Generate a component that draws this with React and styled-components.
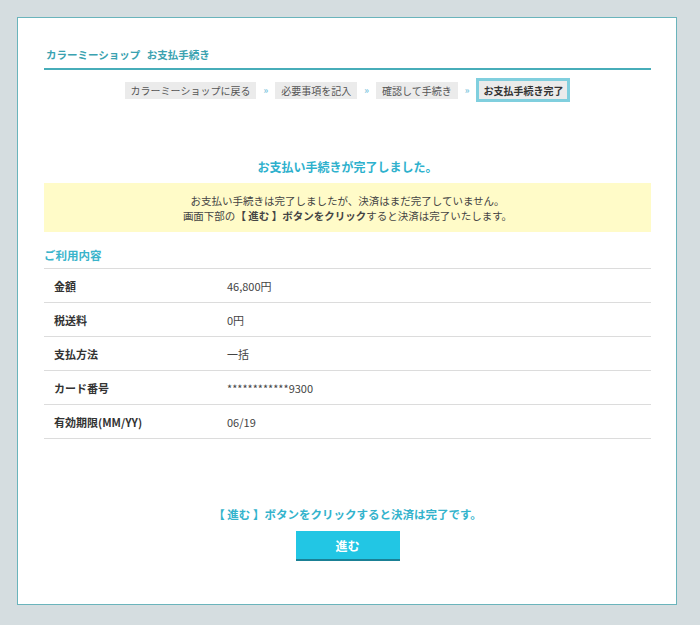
import React from 'react';
import styled, { createGlobalStyle } from 'styled-components';

const GlobalStyle = createGlobalStyle`
  html, body {
    margin: 0;
    padding: 0;
    background: #d5dde0;
  }
  body {
    font-family: "Noto Sans CJK JP", "Noto Sans", sans-serif;
    color: #444;
  }
`;

const Page = styled.div`
  padding: 17px 23px 20px 17px;
`;

const Panel = styled.div`
  background: #ffffff;
  border: 1px solid #6ab4bc;
  padding: 28px 25px 43px 26px;
`;

const Title = styled.h1`
  margin: 0;
  font-size: 10.5px;
  line-height: 18px;
  font-weight: 700;
  color: #3aa2b0;
  padding: 0 2px 4px;
  border-bottom: 2px solid #47adb9;
  word-spacing: 4px;
`;

const Steps = styled.ol`
  list-style: none;
  margin: 8px 0 0;
  padding: 0;
  height: 24px;
  display: flex;
  align-items: center;
  justify-content: center;
  gap: 7px;
`;

const Step = styled.li`
  display: flex;
  align-items: center;
  height: ${p => (p.current ? '18px' : '17px')};
  padding: ${p => (p.current ? '0 4px' : '0 6px')};
  background: #ebebeb;
  font-size: 10px;
  font-weight: ${p => (p.current ? 700 : 400)};
  color: ${p => (p.current ? '#333' : '#555')};
  border: ${p => (p.current ? '3px solid #80cfde' : 'none')};
`;

const Arrow = styled.li`
  font-size: 9px;
  font-weight: 700;
  color: #7fc7de;
`;

const Heading = styled.h2`
  margin: 56px 0 0;
  text-align: center;
  font-size: 12px;
  line-height: 18px;
  font-weight: 700;
  color: #2eb1cd;
`;

const Notice = styled.div`
  margin-top: 7px;
  background: #fffbc8;
  height: 49px;
  display: flex;
  flex-direction: column;
  align-items: center;
  justify-content: center;
  font-size: 10.5px;
  line-height: 15px;
  color: #444;

  strong {
    font-weight: 700;
  }
`;

const Section = styled.h3`
  margin: 14px 0 0;
  font-size: 11.5px;
  line-height: 18px;
  font-weight: 700;
  color: #3ab4cb;
`;

const Table = styled.table`
  margin-top: 4px;
  width: 100%;
  border-collapse: collapse;
  border-top: 1px solid #dcdcdc;
`;

const Row = styled.tr`
  border-bottom: 1px solid #dcdcdc;
`;

const Label = styled.th`
  width: 173px;
  height: 33px;
  padding: 0 0 0 10px;
  text-align: left;
  font-size: 11px;
  font-weight: 700;
  color: #333;
`;

const Value = styled.td`
  padding: 0;
  font-size: 11px;
  color: #444;
`;

const Footer = styled.div`
  margin-top: 67px;
  display: flex;
  flex-direction: column;
  align-items: center;
  gap: 9px;
`;

const FooterText = styled.p`
  margin: 0;
  font-size: 11.5px;
  line-height: 16px;
  font-weight: 700;
  color: #33b3cc;
`;

const Button = styled.button`
  width: 104px;
  height: 30px;
  border: none;
  border-bottom: 2px solid #1a8095;
  background: #22c6e4;
  color: #ffffff;
  font-family: inherit;
  font-size: 12px;
  font-weight: 700;
  cursor: pointer;
`;

const steps = ['カラーミーショップに戻る', '必要事項を記入', '確認して手続き', 'お支払手続き完了'];

const rows = [
  ['金額', '46,800円'],
  ['税送料', '0円'],
  ['支払方法', '一括'],
  ['カード番号', '************9300'],
  ['有効期限(MM/YY)', '06/19'],
];

const App = () => (
  <Page>
    <GlobalStyle />
    <Panel>
      <Title>カラーミーショップ お支払手続き</Title>
      <Steps>
        {steps.map((s, i) => (
          <React.Fragment key={s}>
            {i > 0 && <Arrow>»</Arrow>}
            <Step current={i === steps.length - 1}>{s}</Step>
          </React.Fragment>
        ))}
      </Steps>
      <Heading>お支払い手続きが完了しました。</Heading>
      <Notice>
        <span>お支払い手続きは完了しましたが、決済はまだ完了していません。</span>
        <span>
          画面下部の<strong>【 進む 】ボタンをクリック</strong>すると決済は完了いたします。
        </span>
      </Notice>
      <Section>ご利用内容</Section>
      <Table>
        <tbody>
          {rows.map(([k, v]) => (
            <Row key={k}>
              <Label>{k}</Label>
              <Value>{v}</Value>
            </Row>
          ))}
        </tbody>
      </Table>
      <Footer>
        <FooterText>【 進む 】ボタンをクリックすると決済は完了です。</FooterText>
        <Button>進む</Button>
      </Footer>
    </Panel>
  </Page>
);

export default App;
